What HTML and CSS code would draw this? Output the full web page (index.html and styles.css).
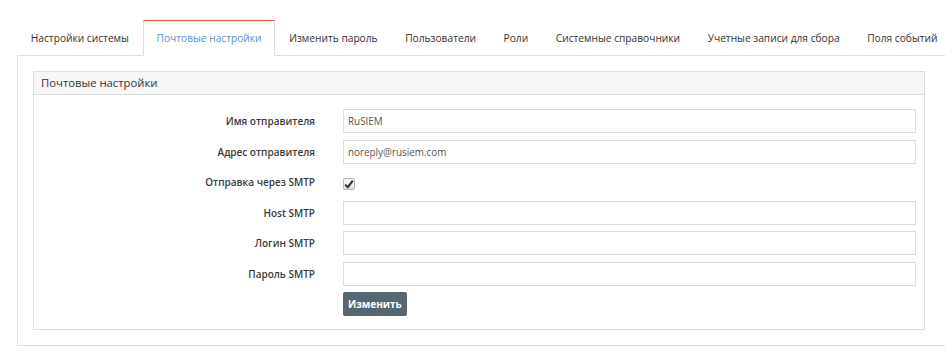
FILE: index.html
```html
<!DOCTYPE html>
<html lang="ru">
<head>
  <meta charset="UTF-8" />
  <meta name="viewport" content="width=device-width, initial-scale=1.0"/>
  <title>Почтовые настройки</title>
  <link rel="stylesheet" href="styles.css">
</head>
<body>

  <div class="page">
    <ul class="tabs">
      <li>Настройки системы</li>
      <li class="active">Почтовые настройки</li>
      <li>Изменить пароль</li>
      <li>Пользователи</li>
      <li>Роли</li>
      <li>Системные справочники</li>
      <li>Учетные записи для сбора</li>
      <li>Поля событий</li>
    </ul>

    <div class="tab-content">
      <div class="panel">
        <div class="panel-heading">Почтовые настройки</div>
        <form class="panel-body">
          <label>Имя отправителя</label>
          <input type="text" value="RuSIEM">

          <label>Адрес отправителя</label>
          <input type="text" value="noreply@rusiem.com">

          <label>Отправка через SMTP</label>
          <div class="check-cell">
            <span class="checkbox">
              <svg width="10" height="10" viewBox="0 0 10 10"><path d="M1.2 5.6 L3.8 8.2 L8.8 1.6" fill="none" stroke="#333" stroke-width="2"/></svg>
            </span>
          </div>

          <label>Host SMTP</label>
          <input type="text">

          <label>Логин SMTP</label>
          <input type="text">

          <label>Пароль SMTP</label>
          <input type="password">

          <span></span>
          <div><button type="button" class="btn">Изменить</button></div>
        </form>
      </div>
    </div>
  </div>

</body>
</html>
```

FILE: styles.css
```css
body {
  margin: 0;
  font-family: "Open Sans", Arial, sans-serif;
  font-size: 10.2px;
  color: #333;
  background: #fff;
}

.page {
  padding: 20px 0 0 17px;
}

.tabs {
  display: flex;
  list-style: none;
  margin: 0;
  padding: 0;
  border-bottom: 1px solid #ddd;
}

.tabs li {
  padding: 10px 12.8px 9px;
  line-height: 15px;
  border: 1px solid transparent;
  margin-bottom: -1px;
  white-space: nowrap;
  color: #333;
}

.tabs li.active {
  border-color: #ddd;
  border-top-color: #e05a4c;
  border-bottom-color: #fff;
  background: #fff;
  color: #5b8fcf;
}

.tab-content {
  border-left: 1px solid #ddd;
  border-bottom: 1px solid #ddd;
  padding: 15px 20px 15px 15px;
}

.panel {
  border: 1px solid #ddd;
}

.panel-heading {
  background: #f7f7f7;
  border-bottom: 1px solid #ddd;
  padding: 3px 7px;
  font-size: 11.3px;
  line-height: 16px;
}

.panel-body {
  display: grid;
  grid-template-columns: 281px 1fr;
  column-gap: 28px;
  row-gap: 6.5px;
  padding: 14px 8px 13px 0;
  margin: 0;
}

.panel-body label {
  text-align: right;
  font-size: 10px;
  font-weight: 600;
  line-height: 24px;
  color: #3a3a3a;
}

.panel-body input {
  height: 24px;
  box-sizing: border-box;
  border: 1px solid #ddd;
  padding: 0 4px;
  font-family: inherit;
  font-size: 9.9px;
  color: #555;
  outline: none;
}

.check-cell {
  height: 24px;
  display: flex;
  align-items: center;
}

.checkbox {
  width: 12px;
  height: 12px;
  box-sizing: border-box;
  border: 1px solid #b5b5b5;
  border-radius: 2px;
  background: linear-gradient(#fafafa, #e2e2e2);
  display: flex;
  align-items: center;
  justify-content: center;
  margin-top: 3px;
}

.btn {
  height: 24px;
  padding: 0 5px;
  border: none;
  border-radius: 2px;
  background: #566771;
  color: #fff;
  font-family: inherit;
  font-size: 10px;
  font-weight: 700;
  cursor: pointer;
}
```
